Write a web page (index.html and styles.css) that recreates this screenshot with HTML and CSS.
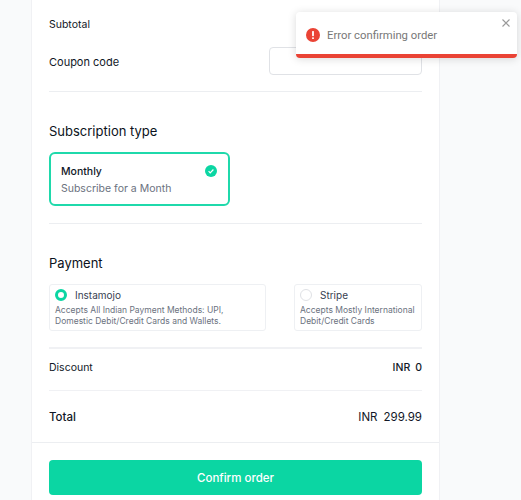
FILE: index.html
```html
<!DOCTYPE html>
<html lang="en">
<head>
<meta charset="utf-8">
<title>Confirm order</title>
<link rel="stylesheet" href="styles.css">
</head>
<body>
<main class="card">
  <section class="summary">
    <div class="row subtotal"><span>Subtotal</span></div>
    <div class="row coupon"><span>Coupon code</span><input class="coupon-input" type="text" aria-label="Coupon code"></div>
  </section>
  <section class="subscription">
    <h2 class="heading">Subscription type</h2>
    <div class="plan">
      <div class="plan-top">
        <span class="plan-name">Monthly</span>
        <svg class="plan-check" viewBox="0 0 12 12" width="12" height="12"><circle cx="6" cy="6" r="6" fill="#0bd6a3"/><path d="M3.6 6.2 5.2 7.8 8.4 4.5" fill="none" stroke="#fff" stroke-width="1.2"/></svg>
      </div>
      <div class="plan-desc">Subscribe for a Month</div>
    </div>
  </section>
  <section class="payment">
    <h2 class="heading">Payment</h2>
    <div class="options">
      <div class="option option-main">
        <div class="option-top"><span class="radio radio-on"></span><span class="option-name">Instamojo</span></div>
        <p class="option-desc">Accepts All Indian Payment Methods: UPI, Domestic Debit/Credit Cards and Wallets.</p>
      </div>
      <div class="option option-alt">
        <div class="option-top"><span class="radio"></span><span class="option-name">Stripe</span></div>
        <p class="option-desc">Accepts Mostly International Debit/Credit Cards</p>
      </div>
    </div>
  </section>
  <div class="row discount"><span>Discount</span><span class="amount"><span>INR</span><span>0</span></span></div>
  <div class="row total"><span>Total</span><span class="amount"><span>INR</span><span>299.99</span></span></div>
  <footer class="footer"><button class="confirm" type="button">Confirm order</button></footer>
</main>
<div class="toast" role="alert">
  <svg class="toast-icon" viewBox="0 0 14 14" width="14" height="14"><circle cx="7" cy="7" r="7" fill="#ea4335"/><rect x="6.1" y="3" width="1.8" height="5.2" rx=".6" fill="#fff"/><rect x="6.1" y="9.3" width="1.8" height="1.8" rx=".6" fill="#fff"/></svg>
  <span class="toast-text">Error confirming order</span>
  <svg class="toast-close" viewBox="0 0 8 8" width="8" height="8"><path d="M.5.5l7 7M7.5.5l-7 7" stroke="#9a9a9a" stroke-width="1.1" fill="none"/></svg>
</div>
</body>
</html>
```

FILE: styles.css
```css
* { box-sizing: border-box; }
html, body { margin: 0; height: 500px; overflow: hidden; }
body {
  background: #f9fafb;
  font-family: Inter, "Liberation Sans", sans-serif;
  color: #111827;
  font-size: 11px;
}
.card {
  margin-left: 31px;
  width: 409px;
  height: 500px;
  background: #fff;
  border-left: 1px solid #f0f1f4;
  border-right: 1px solid #f0f1f4;
}
.row { display: flex; justify-content: space-between; align-items: center; margin: 0 17px; }
.summary { margin: 0 17px; height: 92px; border-bottom: 1px solid #eceef1; }
.summary .row { margin: 0; }
.subtotal { height: 47px; font-size: 10.5px; padding-top: 1px; }
.coupon { height: 28px; }
.coupon span { padding-top: 1px; }
.coupon-input {
  width: 153px; height: 28px;
  border: 1px solid #e0e2e6; border-radius: 4px; background: #fff;
}
.heading { margin: 0; font-size: 13px; font-weight: 400; line-height: 18px; color: #0b1220; }
.subscription { margin: 0 17px; height: 132px; padding-top: 30px; border-bottom: 1px solid #eceef1; }
.plan {
  margin-top: 12px; width: 181px; height: 54px;
  border: 2px solid #1fd9ab; border-radius: 6px;
  padding: 10px 11px 10px 10px;
}
.plan-top { display: flex; justify-content: space-between; align-items: center; height: 14px; }
.plan-name { font-weight: 500; font-size: 10.5px; }
.plan-desc { margin-top: 4px; color: #6b7280; font-size: 10.5px; line-height: 14px; }
.payment { margin: 0 17px; height: 125px; padding-top: 30px; border-bottom: 2px solid #f0f1f4; }
.options { display: flex; justify-content: space-between; margin-top: 12px; }
.option { height: 47px; border: 1px solid #eef0f3; border-radius: 3px; padding: 3px 5px; }
.option-main { width: 217px; }
.option-alt { width: 128px; padding-right: 2px; }
.option-top { display: flex; align-items: center; gap: 8px; height: 14px; }
.radio { width: 12px; height: 12px; border-radius: 50%; border: 1px solid #dfe1e5; background: #fff; }
.radio-on { border: 3.5px solid #0bd6a3; }
.option-name { font-size: 10px; color: #374151; }
.option-desc { margin: 3px 0 0; font-size: 8.5px; line-height: 11px; color: #6b7280; }
.discount { height: 42px; padding-bottom: 4px; border-bottom: 1px solid #f0f1f4; font-size: 10.5px; }
.total { height: 51px; font-size: 11.5px; }
.total span:first-child { font-weight: 500; }
.amount { display: flex; gap: 5px; }
.discount .amount { font-weight: 500; }
.total .amount { gap: 6px; }
.total .amount span { font-weight: 400; }
.footer { border-top: 1px solid #eceef1; padding: 17px 17px 0; }
.confirm {
  display: block; width: 100%; height: 35px;
  border: 0; border-radius: 4px;
  background: #0bd6a3; color: #fff;
  font: 500 11.5px Inter, "Liberation Sans", sans-serif;
}
.toast {
  position: absolute; left: 296px; top: 12px;
  width: 221px; height: 46px;
  display: flex; align-items: center;
  padding: 4px 0 0 10px;
  background: #fff;
  border-bottom: 4px solid #ea4335;
  border-radius: 4px;
  box-shadow: 0 1px 8px rgba(0,0,0,.15);
}
.toast-text { margin-left: 7px; font: 11.3px Roboto, "Liberation Sans", sans-serif; color: #777; }
.toast-close { position: absolute; right: 7px; top: 7px; }
```
